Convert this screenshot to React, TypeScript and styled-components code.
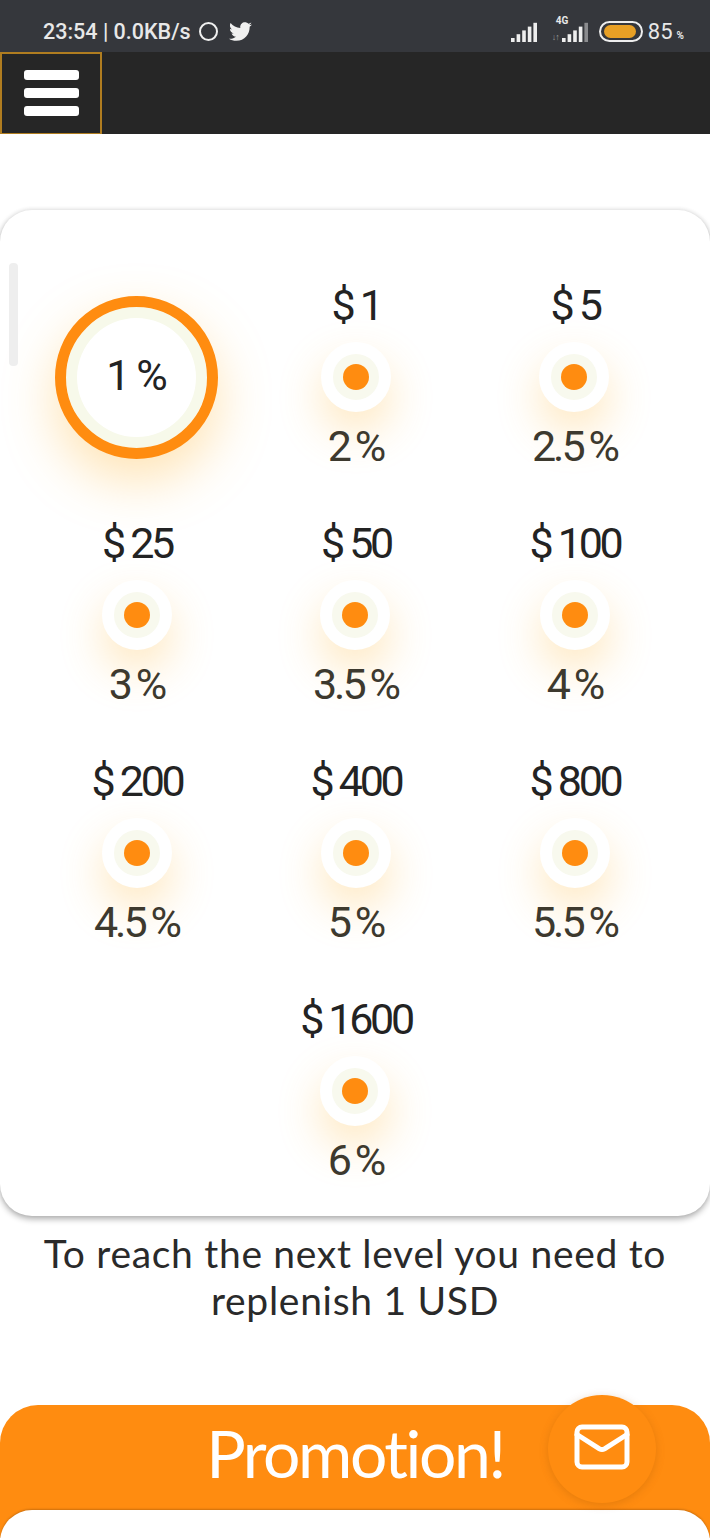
import React from "react";
import styled, { createGlobalStyle } from "styled-components";
import { FaTwitter } from "react-icons/fa";
import { Mail } from "lucide-react";

const levels = [
  { amount: "", rate: "1", current: true },
  { amount: "1", rate: "2" },
  { amount: "5", rate: "2.5" },
  { amount: "25", rate: "3" },
  { amount: "50", rate: "3.5" },
  { amount: "100", rate: "4" },
  { amount: "200", rate: "4.5" },
  { amount: "400", rate: "5" },
  { amount: "800", rate: "5.5" },
  { amount: "1600", rate: "6", column: 2 },
];

const Signal = ({ bars, dim }: { bars: number; dim?: boolean }) => (
  <svg width="28" height="20" viewBox="0 0 28 20">
    {Array.from({ length: bars }).map((_, i) => (
      <rect
        key={i}
        x={i * 5.6}
        y={16 - i * 3.8}
        width="3.6"
        height={4 + i * 3.8}
        fill={dim && i === bars - 1 ? "#8a8b8e" : "#eeeeee"}
      />
    ))}
  </svg>
);

export default function App() {
  return (
    <Page>
      <GlobalStyle />
      <StatusBar>
        <StatusLeft>
          <span>23:54 | 0.0KB/s</span>
          <RingDot />
          <FaTwitter size={23} color="#f0f0f0" />
        </StatusLeft>
        <StatusRight>
          <Signal bars={5} />
          <Network>
            <NetworkLabel>4G</NetworkLabel>
            <NetworkArrows>↓↑</NetworkArrows>
            <Signal bars={5} dim />
          </Network>
          <Battery>
            <BatteryFill />
          </Battery>
          <BatteryText>
            85<small>%</small>
          </BatteryText>
        </StatusRight>
      </StatusBar>

      <NavBar>
        <MenuToggle>
          <MenuLine />
          <MenuLine />
          <MenuLine />
        </MenuToggle>
      </NavBar>

      <LevelsCard>
        <ScrollThumb />
        <LevelsGrid>
          {levels.map((level) =>
            level.current ? (
              <CurrentLevel key={level.rate}>
                <CurrentText>
                  {level.rate}
                  <Percent>%</Percent>
                </CurrentText>
              </CurrentLevel>
            ) : (
              <Level key={level.rate} $column={level.column}>
                <Amount>
                  <Dollar>$</Dollar>
                  {level.amount}
                </Amount>
                <Dot>
                  <DotCore />
                </Dot>
                <Rate>
                  {level.rate}
                  <Percent>%</Percent>
                </Rate>
              </Level>
            ),
          )}
        </LevelsGrid>
      </LevelsCard>

      <NextLevel>
        To reach the next level you need to
        <br />
        replenish 1 USD
      </NextLevel>

      <Promotion>
        <PromotionTitle>Promotion!</PromotionTitle>
        <PromotionBody />
        <MailButton>
          <Mail size={60} color="#fff" strokeWidth={2} />
        </MailButton>
      </Promotion>
    </Page>
  );
}

const GlobalStyle = createGlobalStyle`
  html, body {
    margin: 0;
    padding: 0;
    background: #fff;
  }
`;

const Page = styled.div`
  width: 710px;
  height: 1538px;
  overflow: hidden;
  background: #fff;
  font-family: Roboto, "Liberation Sans", sans-serif;
`;

const StatusBar = styled.div`
  height: 52px;
  box-sizing: border-box;
  padding: 11px 26px 0 43px;
  background: #35373c;
  display: flex;
  align-items: center;
  justify-content: space-between;
  color: #e8e8e8;
`;

const StatusLeft = styled.div`
  display: flex;
  align-items: center;
  gap: 11px;
  font-size: 21.5px;
  font-weight: 500;
`;

const RingDot = styled.span`
  width: 19px;
  height: 19px;
  box-sizing: border-box;
  border: 2.5px solid #f0f0f0;
  border-radius: 50%;
  margin-left: -3px;
`;

const StatusRight = styled.div`
  display: flex;
  align-items: center;
`;

const Network = styled.div`
  position: relative;
  margin-left: 12px;
  padding-left: 11px;
  display: flex;
`;

const NetworkLabel = styled.span`
  position: absolute;
  left: 5px;
  top: -7px;
  font-size: 10px;
  font-weight: 700;
`;

const NetworkArrows = styled.span`
  position: absolute;
  left: 1px;
  bottom: 0;
  font-size: 9px;
  letter-spacing: -1px;
  color: #9a9a9a;
`;

const Battery = styled.div`
  width: 44px;
  height: 21px;
  box-sizing: border-box;
  margin-left: 9px;
  padding: 2px 5px 2px 3px;
  border: 2px solid #eeeeee;
  border-radius: 11px;
  display: flex;
`;

const BatteryFill = styled.div`
  flex: 1;
  background: #e8a025;
  border-radius: 7px;
`;

const BatteryText = styled.span`
  margin-left: 5px;
  font-size: 22px;

  small {
    font-size: 10px;
    font-weight: 700;
    margin-left: 4px;
  }
`;

const NavBar = styled.div`
  height: 82px;
  background: #262626;
  display: flex;
`;

const MenuToggle = styled.div`
  width: 102px;
  box-sizing: border-box;
  border: 2px solid #b07d20;
  border-bottom-width: 1.5px;
  padding-top: 16px;
  display: flex;
  flex-direction: column;
  align-items: center;
  gap: 8px;
`;

const MenuLine = styled.span`
  width: 55px;
  height: 10px;
  background: #fff;
  border-radius: 3px;
`;

const LevelsCard = styled.div`
  position: relative;
  margin-top: 76px;
  height: 1006px;
  box-sizing: border-box;
  padding: 72px 28.5px 0;
  background: #fff;
  border-radius: 32px;
  box-shadow: 0 3px 6px rgba(0, 0, 0, 0.32), 0 -1px 4px rgba(0, 0, 0, 0.07);
`;

const ScrollThumb = styled.div`
  position: absolute;
  left: 9px;
  top: 53px;
  width: 9px;
  height: 103px;
  background: #eeeeee;
  border-radius: 4px;
`;

const LevelsGrid = styled.div`
  display: grid;
  grid-template-columns: repeat(3, 219px);
  grid-auto-rows: 187px;
  row-gap: 51px;
  justify-items: center;
`;

const Level = styled.div<{ $column?: number }>`
  grid-column: ${(p) => p.$column ?? "auto"};
  display: flex;
  flex-direction: column;
  align-items: center;
`;

const Amount = styled.div`
  height: 46px;
  line-height: 46px;
  margin-right: 2px;
  font-size: 43px;
  letter-spacing: -3.3px;
  color: #232323;
`;

const Dollar = styled.span`
  margin-right: 4px;
  letter-spacing: 0;
`;

const Percent = styled.span`
  margin-left: 6px;
  letter-spacing: 0;
`;

const Dot = styled.div`
  width: 70px;
  height: 70px;
  box-sizing: border-box;
  margin: 14px 3px 1px 0;
  border: 12px solid #fff;
  border-radius: 50%;
  background: #f8f9ee;
  display: flex;
  align-items: center;
  justify-content: center;
  box-shadow: 0 20px 44px rgba(255, 185, 60, 0.32);
`;

const DotCore = styled.span`
  width: 26px;
  height: 26px;
  border-radius: 50%;
  background: #ff8c10;
`;

const Rate = styled.div`
  height: 46px;
  line-height: 46px;
  margin-top: 10px;
  font-size: 43px;
  letter-spacing: -3px;
  color: #3d392e;
`;

const CurrentLevel = styled.div`
  width: 163px;
  height: 163px;
  box-sizing: border-box;
  margin: 14px 4px 0 0;
  border: 11px solid #ff8c10;
  border-radius: 50%;
  background: #fff;
  display: flex;
  align-items: center;
  justify-content: center;
  box-shadow: inset 0 0 0 11px #f7f9ea, 0 22px 52px rgba(255, 185, 60, 0.38);
`;

const CurrentText = styled.span`
  margin: 0 0 6px 2px;
  font-size: 43px;
  color: #232323;
`;

const NextLevel = styled.p`
  margin: 14px 0 81px;
  text-align: center;
  font-family: Lato, "Open Sans", sans-serif;
  font-size: 39px;
  line-height: 47px;
  letter-spacing: 0.7px;
  color: #2a2a2a;
`;

const Promotion = styled.section`
  position: relative;
  height: 300px;
  background: #ff8c10;
  border-radius: 38px 38px 0 0;
`;

const PromotionTitle = styled.h2`
  margin: 0;
  height: 105px;
  line-height: 96px;
  text-align: center;
  font-family: Lato, "Open Sans", sans-serif;
  font-size: 66px;
  font-weight: 400;
  letter-spacing: -2.4px;
  color: #fff;
`;

const PromotionBody = styled.div`
  height: 195px;
  background: #fff;
  border-radius: 32px 32px 0 0;
  box-shadow: 0 -1px 2px rgba(0, 0, 0, 0.2);
`;

const MailButton = styled.div`
  position: absolute;
  right: 54px;
  top: -10px;
  width: 108px;
  height: 108px;
  padding-bottom: 5px;
  box-sizing: border-box;
  border-radius: 50%;
  background: #ff8c10;
  display: flex;
  align-items: center;
  justify-content: center;
  box-shadow: 0 2px 8px rgba(150, 80, 0, 0.25);
`;
